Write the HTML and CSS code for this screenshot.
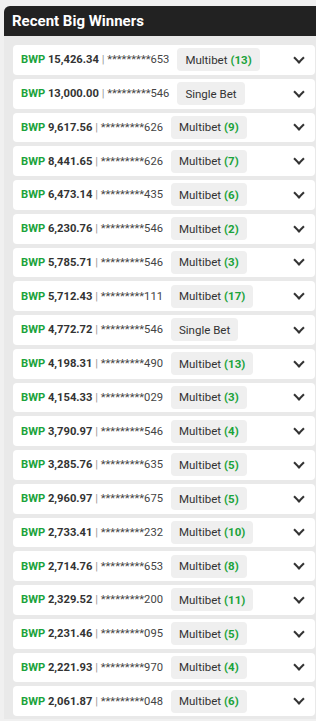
FILE: index.html
```html
<!DOCTYPE html>
<html lang="en">
<head>
    <meta charset="UTF-8">
    <meta name="viewport" content="width=device-width, initial-scale=1.0">
    <title>Recent Big Winners</title>
    <link rel="stylesheet" href="styles.css">
</head>
<body>
    <div class="winners">
        <h2 class="winners-title">Recent Big Winners</h2>

        <ul class="winners-list">
            <li class="winner"><span class="info"><b class="cur">BWP</b> <b>15,426.34</b> <span class="sep">|</span> *********653</span><span class="bet">Multibet <b>(13)</b></span><span class="chevron"></span></li>
            <li class="winner"><span class="info"><b class="cur">BWP</b> <b>13,000.00</b> <span class="sep">|</span> *********546</span><span class="bet">Single Bet</span><span class="chevron"></span></li>
            <li class="winner"><span class="info"><b class="cur">BWP</b> <b>9,617.56</b> <span class="sep">|</span> *********626</span><span class="bet">Multibet <b>(9)</b></span><span class="chevron"></span></li>
            <li class="winner"><span class="info"><b class="cur">BWP</b> <b>8,441.65</b> <span class="sep">|</span> *********626</span><span class="bet">Multibet <b>(7)</b></span><span class="chevron"></span></li>
            <li class="winner"><span class="info"><b class="cur">BWP</b> <b>6,473.14</b> <span class="sep">|</span> *********435</span><span class="bet">Multibet <b>(6)</b></span><span class="chevron"></span></li>
            <li class="winner"><span class="info"><b class="cur">BWP</b> <b>6,230.76</b> <span class="sep">|</span> *********546</span><span class="bet">Multibet <b>(2)</b></span><span class="chevron"></span></li>
            <li class="winner"><span class="info"><b class="cur">BWP</b> <b>5,785.71</b> <span class="sep">|</span> *********546</span><span class="bet">Multibet <b>(3)</b></span><span class="chevron"></span></li>
            <li class="winner"><span class="info"><b class="cur">BWP</b> <b>5,712.43</b> <span class="sep">|</span> *********111</span><span class="bet">Multibet <b>(17)</b></span><span class="chevron"></span></li>
            <li class="winner"><span class="info"><b class="cur">BWP</b> <b>4,772.72</b> <span class="sep">|</span> *********546</span><span class="bet">Single Bet</span><span class="chevron"></span></li>
            <li class="winner"><span class="info"><b class="cur">BWP</b> <b>4,198.31</b> <span class="sep">|</span> *********490</span><span class="bet">Multibet <b>(13)</b></span><span class="chevron"></span></li>
            <li class="winner"><span class="info"><b class="cur">BWP</b> <b>4,154.33</b> <span class="sep">|</span> *********029</span><span class="bet">Multibet <b>(3)</b></span><span class="chevron"></span></li>
            <li class="winner"><span class="info"><b class="cur">BWP</b> <b>3,790.97</b> <span class="sep">|</span> *********546</span><span class="bet">Multibet <b>(4)</b></span><span class="chevron"></span></li>
            <li class="winner"><span class="info"><b class="cur">BWP</b> <b>3,285.76</b> <span class="sep">|</span> *********635</span><span class="bet">Multibet <b>(5)</b></span><span class="chevron"></span></li>
            <li class="winner"><span class="info"><b class="cur">BWP</b> <b>2,960.97</b> <span class="sep">|</span> *********675</span><span class="bet">Multibet <b>(5)</b></span><span class="chevron"></span></li>
            <li class="winner"><span class="info"><b class="cur">BWP</b> <b>2,733.41</b> <span class="sep">|</span> *********232</span><span class="bet">Multibet <b>(10)</b></span><span class="chevron"></span></li>
            <li class="winner"><span class="info"><b class="cur">BWP</b> <b>2,714.76</b> <span class="sep">|</span> *********653</span><span class="bet">Multibet <b>(8)</b></span><span class="chevron"></span></li>
            <li class="winner"><span class="info"><b class="cur">BWP</b> <b>2,329.52</b> <span class="sep">|</span> *********200</span><span class="bet">Multibet <b>(11)</b></span><span class="chevron"></span></li>
            <li class="winner"><span class="info"><b class="cur">BWP</b> <b>2,231.46</b> <span class="sep">|</span> *********095</span><span class="bet">Multibet <b>(5)</b></span><span class="chevron"></span></li>
            <li class="winner"><span class="info"><b class="cur">BWP</b> <b>2,221.93</b> <span class="sep">|</span> *********970</span><span class="bet">Multibet <b>(4)</b></span><span class="chevron"></span></li>
            <li class="winner"><span class="info"><b class="cur">BWP</b> <b>2,061.87</b> <span class="sep">|</span> *********048</span><span class="bet">Multibet <b>(6)</b></span><span class="chevron"></span></li>
        </ul>
    </div>
</body>
</html>
```

FILE: styles.css
```css
* {
    margin: 0;
    padding: 0;
    box-sizing: border-box;
}

html, body {
    overflow: hidden;
}

body {
    font-family: Roboto, 'Liberation Sans', sans-serif;
    background: #f0f0f0;
    color: #333;
}

.winners {
    margin: 6px -8px 0 4px;
    background: #e9e9e9;
    border-radius: 6px 6px 0 0;
    padding-bottom: 3px;
}

.winners-title {
    height: 30px;
    padding-left: 8px;
    display: flex;
    align-items: center;
    background: #222;
    color: #fff;
    font-size: 15px;
    font-weight: 700;
    border-radius: 6px 6px 0 0;
}

.winners-list {
    list-style: none;
    padding: 9px 9px 0 9px;
    display: flex;
    flex-direction: column;
    gap: 4px;
}

.winner {
    height: 29.75px;
    display: flex;
    align-items: center;
    gap: 8px;
    padding: 0 12px 0 8px;
    background: #fff;
    border-radius: 4px;
    font-size: 11.5px;
    white-space: nowrap;
}

.info {
    font-size: 11.2px;
    color: #444;
}

.info b {
    color: #333;
}

.info .cur {
    color: #1ba33b;
}

.sep {
    color: #999;
}

.bet {
    height: 23px;
    padding: 0 8px;
    display: flex;
    align-items: center;
    gap: 3px;
    background: #efefef;
    border-radius: 4px;
    color: #333;
}

.bet b {
    color: #1ba33b;
}

.chevron {
    margin-left: auto;
    width: 8px;
    height: 8px;
    border-right: 2px solid #333;
    border-bottom: 2px solid #333;
    transform: translateY(-2px) rotate(45deg);
}
```
